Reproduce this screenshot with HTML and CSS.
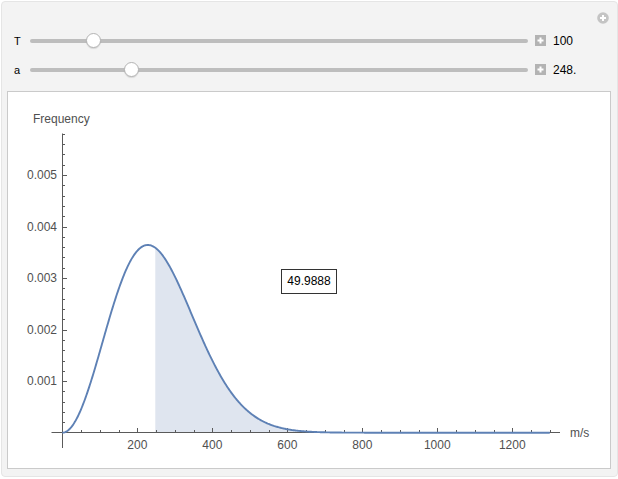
FILE: index.html
```html
<!DOCTYPE html>
<html>
<head>
<meta charset="utf-8">
<link rel="stylesheet" href="styles.css">
</head>
<body>
<div class="panel">
  <div class="toolbar">
    <svg class="addbtn" width="12" height="12" viewBox="0 0 12 12"><circle cx="6" cy="6" r="5.8" fill="#c4c4c4"/><path d="M6 3v6M3 6h6" stroke="#fff" stroke-width="2"/></svg>
  </div>
  <div class="row">
    <span class="lbl">T</span>
    <div class="track"><span class="thumb" style="left:55.5px"></span></div>
    <svg class="pbtn" width="11" height="11" viewBox="0 0 11 11"><rect width="11" height="11" fill="#b3b3b3"/><path d="M5.5 2.5v6M2.5 5.5h6" stroke="#fff" stroke-width="2"/></svg>
    <span class="val">100</span>
  </div>
  <div class="row">
    <span class="lbl">a</span>
    <div class="track"><span class="thumb" style="left:93.5px"></span></div>
    <svg class="pbtn" width="11" height="11" viewBox="0 0 11 11"><rect width="11" height="11" fill="#b3b3b3"/><path d="M5.5 2.5v6M2.5 5.5h6" stroke="#fff" stroke-width="2"/></svg>
    <span class="val">248.</span>
  </div>
  <div class="plot">
    <svg id="chart" class="chart" width="602" height="376" viewBox="8 92 602 376">
      <path id="fill" class="area" d=""/>
      <g id="ticks" class="ticks"></g>
      <path id="curve" class="curve" d=""/>
      <text class="axlabel" x="33" y="123">Frequency</text>
      <g class="ylab">
        <text x="57" y="179">0.005</text>
        <text x="57" y="230.5">0.004</text>
        <text x="57" y="282">0.003</text>
        <text x="57" y="333.5">0.002</text>
        <text x="57" y="385">0.001</text>
      </g>
      <g class="xlab">
        <text x="137.3" y="448.5">200</text>
        <text x="212.3" y="448.5">400</text>
        <text x="287.3" y="448.5">600</text>
        <text x="362.3" y="448.5">800</text>
        <text x="437.3" y="448.5">1000</text>
        <text x="512.3" y="448.5">1200</text>
      </g>
      <text class="axlabel" x="570" y="437">m/s</text>
    </svg>
    <div class="callout">49.9888</div>
  </div>
</div>
<script src="script.js"></script>
</body>
</html>
```

FILE: styles.css
```css
html, body {
  margin: 0;
  padding: 0;
  background: #ffffff;
}
body {
  font-family: "Liberation Sans", Arial, sans-serif;
  font-size: 12px;
  color: #000;
}
.panel {
  box-sizing: border-box;
  width: 617px;
  height: 476px;
  margin: 1px 0 0 1px;
  background: #f3f3f3;
  border: 1px solid #e5e5e5;
  border-radius: 4px;
  padding: 0 6px 7px 5px;
  display: flex;
  flex-direction: column;
}
.toolbar {
  height: 24px;
  display: flex;
  justify-content: flex-end;
  align-items: flex-start;
  padding-top: 10px;
  box-sizing: border-box;
  margin-right: 2px;
}
.addbtn {
  display: block;
}
.row {
  height: 29px;
  display: flex;
  align-items: center;
  padding-left: 7px;
}
.lbl {
  width: 16px;
  font-size: 11px;
  line-height: 12px;
}
.track {
  position: relative;
  width: 498px;
  height: 4px;
  border-radius: 2px;
  background: #bdbdbd;
}
.thumb {
  position: absolute;
  top: -6px;
  width: 15px;
  height: 15px;
  box-sizing: border-box;
  border-radius: 50%;
  background: #ffffff;
  border: 1px solid #b4b4b4;
  box-shadow: 0 1px 1px rgba(0,0,0,0.12);
}
.pbtn {
  display: block;
  margin-left: 7px;
}
.val {
  margin-left: 7px;
  font-size: 12px;
}
.plot {
  position: relative;
  margin-top: 7px;
  box-sizing: border-box;
  height: 378px;
  width: 604px;
  background: #ffffff;
  border: 1px solid #cacaca;
}
.chart {
  display: block;
}
.area {
  fill: #dfe5ef;
  stroke: none;
}
.curve {
  fill: none;
  stroke: #5e81b5;
  stroke-width: 1.9;
  stroke-linejoin: round;
}
.ticks line {
  stroke: #5a5a5a;
  stroke-width: 1;
}
.axlabel {
  font-family: "Liberation Sans", Arial, sans-serif;
  font-size: 12px;
  fill: #505050;
}
.ylab text {
  font-family: "Liberation Sans", Arial, sans-serif;
  font-size: 12px;
  fill: #505050;
  text-anchor: end;
}
.xlab text {
  font-family: "Liberation Sans", Arial, sans-serif;
  font-size: 12px;
  fill: #505050;
  text-anchor: middle;
}
.callout {
  position: absolute;
  left: 273px;
  top: 177px;
  width: 56px;
  height: 25px;
  box-sizing: border-box;
  border: 1px solid #333333;
  background: #ffffff;
  font-size: 12px;
  line-height: 23px;
  text-align: center;
  color: #000;
}
```

FILE: script.js
```js
(function () {
  var X0 = 62.3, SX = 0.375;
  var Y0 = 432.7, SY = 51540;
  var vp = 227.95;
  function X(v) { return X0 + v * SX; }
  function Y(f) { return Y0 - f * SY; }
  function f(v) {
    var u = v / vp;
    return 4 / Math.sqrt(Math.PI) * u * u / vp * Math.exp(-u * u);
  }
  var d = [];
  for (var v = 0; v <= 1300; v += 2) {
    d.push((v === 0 ? 'M' : 'L') + X(v).toFixed(2) + ' ' + Y(f(v)).toFixed(2));
  }
  document.getElementById('curve').setAttribute('d', d.join(''));
  var a = 248;
  var fd = ['M' + X(a).toFixed(2) + ' ' + Y0];
  for (var w = a; w <= 1300; w += 2) {
    fd.push('L' + X(w).toFixed(2) + ' ' + Y(f(w)).toFixed(2));
  }
  fd.push('L' + X(1300).toFixed(2) + ' ' + Y0 + 'Z');
  document.getElementById('fill').setAttribute('d', fd.join(''));

  var NS = 'http://www.w3.org/2000/svg';
  var g = document.getElementById('ticks');
  function line(x1, y1, x2, y2) {
    var l = document.createElementNS(NS, 'line');
    l.setAttribute('x1', x1); l.setAttribute('y1', y1);
    l.setAttribute('x2', x2); l.setAttribute('y2', y2);
    g.appendChild(l);
  }
  var ax = 62.5, ay = 432.5;
  line(ax, 133.5, ax, 448);
  line(51.5, ay, 560, ay);
  for (var i = 1; i <= 29; i++) {
    var y = Math.round(Y(i * 0.0002)) + 0.5;
    var major = i % 5 === 0;
    line(ax, y, ax + (major ? 4.5 : 2.5), y);
  }
  for (var k = 1; k <= 26; k++) {
    var x = Math.round(X(k * 50)) + 0.5;
    var maj = (k * 50) % 200 === 0;
    line(x, ay, x, ay - (maj ? 4.5 : 2.5));
  }
})();
```
